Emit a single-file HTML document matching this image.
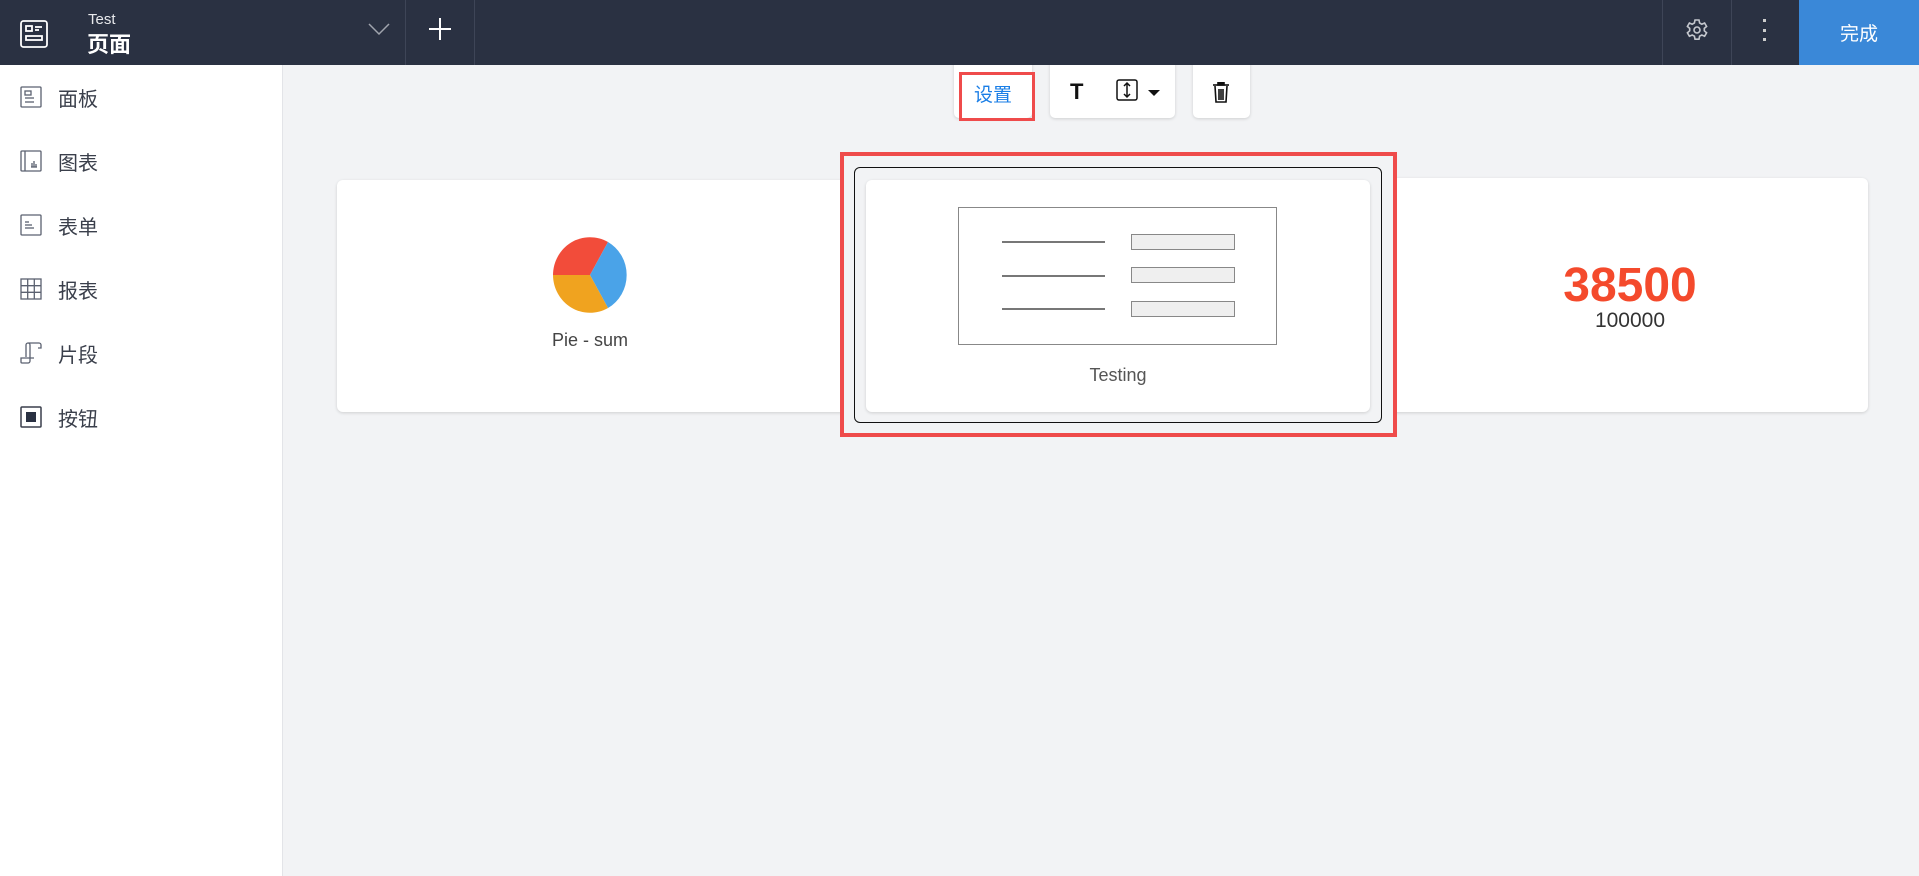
<!DOCTYPE html>
<html><head><meta charset="utf-8"><style>
*{margin:0;padding:0;box-sizing:border-box}
body{width:1919px;height:876px;overflow:hidden;background:#f2f3f5;font-family:"Liberation Sans","Noto Sans CJK SC",sans-serif;position:relative}
.abs{position:absolute}
.hdr{left:0;top:0;width:1919px;height:65px;background:#2a3142}
.side{left:0;top:65px;width:283px;height:811px;background:#fff;border-right:1px solid #e3e4e8}
.item{position:absolute;left:0;width:283px;height:30px;display:flex;align-items:center}
.item span{position:absolute;left:58px;font-size:20px;color:#3a3f4b}
.item svg{position:absolute;left:20px}
.card{background:#fff;border-radius:6px;box-shadow:0 1px 3px rgba(0,0,0,.15)}
</style></head><body>
<div class="abs side"></div>
<div class="item" style="top:82px"><svg width="22" height="22" viewBox="0 0 22 22" fill="none" stroke="#5b6170" stroke-width="1.3"><rect x="1" y="1" width="20" height="20" rx="1"/><rect x="5" y="5" width="6" height="4"/><line x1="5" y1="12" x2="14" y2="12"/><line x1="5" y1="16" x2="14" y2="16"/></svg><span>面板</span></div>
<div class="item" style="top:146px"><svg width="22" height="22" viewBox="0 0 22 22" fill="none" stroke="#5b6170" stroke-width="1.3"><rect x="1" y="1" width="20" height="20" rx="1"/><line x1="5" y1="1" x2="5" y2="21"/><line x1="11" y1="17" x2="17" y2="17"/><line x1="12" y1="13" x2="12" y2="17"/><line x1="14" y1="11" x2="14" y2="17"/><line x1="16" y1="14" x2="16" y2="17"/></svg><span>图表</span></div>
<div class="item" style="top:210px"><svg width="22" height="22" viewBox="0 0 22 22" fill="none" stroke="#5b6170" stroke-width="1.3"><rect x="1" y="1" width="20" height="20" rx="1"/><line x1="5" y1="8" x2="9" y2="8"/><line x1="5" y1="11" x2="12" y2="11"/><line x1="5" y1="14" x2="14" y2="14"/></svg><span>表单</span></div>
<div class="item" style="top:274px"><svg width="22" height="22" viewBox="0 0 22 22" fill="none" stroke="#5b6170" stroke-width="1.3"><rect x="1" y="1" width="20" height="20"/><line x1="1" y1="7.7" x2="21" y2="7.7"/><line x1="1" y1="14.3" x2="21" y2="14.3"/><line x1="7.7" y1="1" x2="7.7" y2="21"/><line x1="14.3" y1="1" x2="14.3" y2="21"/></svg><span>报表</span></div>
<div class="item" style="top:338px"><svg width="22" height="22" viewBox="0 0 22 22" fill="none" stroke="#5b6170" stroke-width="1.3"><path d="M6 15V3a2 2 0 0 1 2-2h11a2 2 0 0 1 2 2v3h-3M8 1a2 2 0 0 1 2 2v16a2 2 0 0 1-2 2H2a1 1 0 0 1-1-1v-4h13"/></svg><span>片段</span></div>
<div class="item" style="top:402px"><svg width="22" height="22" viewBox="0 0 22 22"><rect x="1" y="1" width="20" height="20" rx="1" fill="none" stroke="#3a3f4b" stroke-width="1.5"/><rect x="6" y="6" width="10" height="10" fill="#2a3142"/></svg><span>按钮</span></div>

<!-- toolbar -->
<div class="abs card" style="left:954px;top:60px;width:78px;height:58px;border-radius:0 0 5px 5px"></div>
<div class="abs" style="left:959px;top:72px;width:76px;height:49px;border:3px solid #ef4b4b"></div>
<div class="abs" style="left:974px;top:80px;font-size:19px;color:#1a7ee6">设置</div>
<div class="abs card" style="left:1050px;top:60px;width:125px;height:58px;border-radius:0 0 5px 5px"></div>
<div class="abs" style="left:1070px;top:79px;font-size:22px;font-weight:bold;color:#111">T</div>
<svg class="abs" style="left:1116px;top:79px" width="22" height="22" viewBox="0 0 22 22" fill="none" stroke="#111" stroke-width="1.5"><rect x="1" y="1" width="20" height="20" rx="2"/><line x1="11" y1="4" x2="11" y2="18"/><polyline points="8,7 11,4 14,7"/><polyline points="8,15 11,18 14,15"/></svg>
<svg class="abs" style="left:1148px;top:90px" width="12" height="6" viewBox="0 0 12 6"><polygon points="0,0 12,0 6,6" fill="#111"/></svg>
<div class="abs card" style="left:1193px;top:60px;width:57px;height:58px;border-radius:0 0 5px 5px"></div>
<svg class="abs" style="left:1212px;top:82px" width="18" height="21" viewBox="0 0 18 21" fill="none" stroke="#111" stroke-width="1.6"><line x1="1" y1="3" x2="17" y2="3"/><rect x="6" y="0.8" width="6" height="2.2" fill="#111"/><path d="M3 4l1 16h10l1-16"/><line x1="7" y1="7" x2="7" y2="18"/><line x1="9" y1="7" x2="9" y2="18"/><line x1="11" y1="7" x2="11" y2="18"/></svg>

<!-- header (drawn over toolbar tops) -->
<div class="abs hdr"></div>
<svg class="abs" style="left:20px;top:20px" width="28" height="28" viewBox="0 0 28 28" fill="none" stroke="#fff" stroke-width="1.8"><rect x="1" y="1" width="26" height="26" rx="2.5"/><rect x="6" y="6" width="6" height="5"/><line x1="15" y1="7" x2="22" y2="7"/><line x1="15" y1="10" x2="19" y2="10"/><rect x="6" y="16" width="16" height="4"/></svg>
<div class="abs" style="left:88px;top:11px;color:#e8e9ec;font-size:15px">Test</div>
<div class="abs" style="left:87px;top:31px;color:#fff;font-size:22px;font-weight:bold;line-height:28px">页面</div>
<svg class="abs" style="left:368px;top:22px" width="22" height="14" viewBox="0 0 22 14" fill="none" stroke="#a0a4ad" stroke-width="1.5"><polyline points="1,2 11,12 21,2"/></svg>
<div class="abs" style="left:405px;top:0;width:1px;height:65px;background:#3e4557"></div>
<svg class="abs" style="left:428px;top:17px" width="24" height="24" viewBox="0 0 24 24" stroke="#fff" stroke-width="2"><line x1="12" y1="1" x2="12" y2="23"/><line x1="1" y1="12" x2="23" y2="12"/></svg>
<div class="abs" style="left:474px;top:0;width:1px;height:65px;background:#3e4557"></div>
<div class="abs" style="left:1662px;top:0;width:1px;height:65px;background:#3e4557"></div>
<div class="abs" style="left:1731px;top:0;width:1px;height:65px;background:#3e4557"></div>
<svg class="abs" style="left:1685px;top:18px" width="24" height="24" viewBox="0 0 24 24" fill="none" stroke="#c5c8ce" stroke-width="1.6"><path d="M10 2h4l.6 3 2.2 1.2 2.8-1.2 2 3.4-2.3 2v2.4l2.3 2-2 3.4-2.8-1.2-2.2 1.2-.6 3h-4l-.6-3-2.2-1.2-2.8 1.2-2-3.4 2.3-2V10.4L2.4 8.4l2-3.4 2.8 1.2L9.4 5z"/><circle cx="12" cy="12" r="3"/></svg>
<div class="abs" style="left:1763px;top:19px;width:3px;height:3px;background:#ccc"></div>
<div class="abs" style="left:1763px;top:29px;width:3px;height:3px;background:#ccc"></div>
<div class="abs" style="left:1763px;top:38px;width:3px;height:3px;background:#ccc"></div>
<div class="abs" style="left:1799px;top:0;width:120px;height:65px;background:#3a88d8;color:#fff;font-size:19px;display:flex;align-items:center;justify-content:center">完成</div>

<!-- cards -->
<div class="abs card" style="left:337px;top:180px;width:560px;height:232px"></div>
<svg class="abs" style="left:553px;top:237px" width="74" height="76" viewBox="-37 -38 74 76"><path d="M0 0L-37 0A37 38 0 0 1 18 -33Z" fill="#f24c3a"/><path d="M0 0L18 -33A37 38 0 0 1 18 33Z" fill="#4aa3e8"/><path d="M0 0L18 33A37 38 0 0 1 -37 0Z" fill="#f0a31f"/></svg>
<div class="abs" style="left:490px;top:330px;width:200px;text-align:center;font-size:18px;color:#444">Pie - sum</div>
<div class="abs card" style="left:1340px;top:178px;width:528px;height:234px"></div>
<div class="abs" style="left:1480px;top:258px;width:300px;text-align:center;font-size:48px;color:#f44a2c;font-weight:bold;line-height:56px">38500</div>
<div class="abs" style="left:1530px;top:309px;width:200px;text-align:center;font-size:21px;color:#333">100000</div>

<!-- selection -->
<div class="abs" style="left:840px;top:152px;width:557px;height:285px;border:4px solid #ef4b4b;background:#f2f3f5"></div>
<div class="abs" style="left:854px;top:167px;width:528px;height:256px;border:1.5px solid #111;border-radius:6px"></div>
<div class="abs card" style="left:866px;top:180px;width:504px;height:232px"></div>
<div class="abs" style="left:958px;top:207px;width:319px;height:138px;border:1.5px solid #888"></div>
<div class="abs" style="left:1002px;top:241px;width:103px;height:1.5px;background:#777"></div>
<div class="abs" style="left:1002px;top:275px;width:103px;height:1.5px;background:#777"></div>
<div class="abs" style="left:1002px;top:308px;width:103px;height:1.5px;background:#777"></div>
<div class="abs" style="left:1131px;top:234px;width:104px;height:16px;border:1.5px solid #888;background:#efefef"></div>
<div class="abs" style="left:1131px;top:267px;width:104px;height:16px;border:1.5px solid #888;background:#efefef"></div>
<div class="abs" style="left:1131px;top:301px;width:104px;height:16px;border:1.5px solid #888;background:#efefef"></div>
<div class="abs" style="left:1018px;top:365px;width:200px;text-align:center;font-size:18px;color:#555">Testing</div>
</body></html>
